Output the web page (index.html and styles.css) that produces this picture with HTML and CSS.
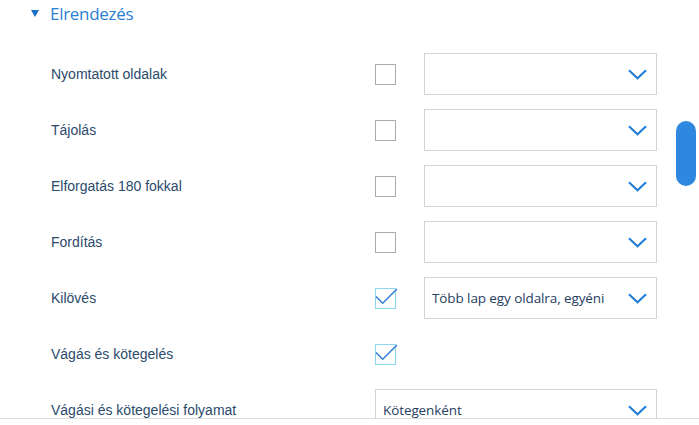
FILE: index.html
```html
<!DOCTYPE html>
<html>
<head>
<meta charset="utf-8">
<link rel="stylesheet" href="styles.css">
</head>
<body>
<div class="page">
  <div class="section-head">
    <span class="tri"></span>
    <span class="title">Elrendezés</span>
  </div>
  <div class="rows">
    <div class="row">
      <div class="label">Nyomtatott oldalak</div>
      <div class="cb"></div>
      <div class="select"><span class="val"></span><svg class="chev" viewBox="0 0 20 11"><path d="M1 1 L10 9.5 L19 1"/></svg></div>
    </div>
    <div class="row">
      <div class="label">Tájolás</div>
      <div class="cb"></div>
      <div class="select"><span class="val"></span><svg class="chev" viewBox="0 0 20 11"><path d="M1 1 L10 9.5 L19 1"/></svg></div>
    </div>
    <div class="row">
      <div class="label">Elforgatás 180 fokkal</div>
      <div class="cb"></div>
      <div class="select"><span class="val"></span><svg class="chev" viewBox="0 0 20 11"><path d="M1 1 L10 9.5 L19 1"/></svg></div>
    </div>
    <div class="row">
      <div class="label">Fordítás</div>
      <div class="cb"></div>
      <div class="select"><span class="val"></span><svg class="chev" viewBox="0 0 20 11"><path d="M1 1 L10 9.5 L19 1"/></svg></div>
    </div>
    <div class="row">
      <div class="label">Kilövés</div>
      <div class="cb checked"><svg class="tick" viewBox="0 0 24 20"><path d="M1 9 L8 16 L23 1"/></svg></div>
      <div class="select"><span class="val">Több lap egy oldalra, egyéni</span><svg class="chev" viewBox="0 0 20 11"><path d="M1 1 L10 9.5 L19 1"/></svg></div>
    </div>
    <div class="row">
      <div class="label">Vágás és kötegelés</div>
      <div class="cb checked"><svg class="tick" viewBox="0 0 24 20"><path d="M1 9 L8 16 L23 1"/></svg></div>
    </div>
    <div class="row">
      <div class="label">Vágási és kötegelési folyamat</div>
      <div class="select wide"><span class="val">Kötegenként</span><svg class="chev" viewBox="0 0 20 11"><path d="M1 1 L10 9.5 L19 1"/></svg></div>
    </div>
  </div>
  <div class="scroll-thumb"></div>
  <div class="footer"></div>
</div>
</body>
</html>
```
FILE: styles.css
```css
html, body {
  margin: 0;
  padding: 0;
  background: #fff;
  overflow: hidden;
}
.page {
  position: relative;
  width: 699px;
  height: 425px;
  overflow: hidden;
}
.section-head {
  display: flex;
  align-items: center;
  height: 26px;
  padding-left: 31px;
}
.tri {
  width: 0;
  height: 0;
  border-left: 4px solid transparent;
  border-right: 4px solid transparent;
  border-top: 7px solid #1b6fc6;
  margin-right: 11px;
  margin-top: 1px;
}
.title {
  font-family: "Open Sans", "Noto Sans", sans-serif;
  font-size: 17px;
  color: #2a7fd4;
  letter-spacing: -0.3px;
}
.rows {
  padding-top: 20px;
  padding-left: 51px;
}
.row {
  display: grid;
  grid-template-columns: 296px 21px 233px;
  column-gap: 28px;
  align-items: center;
  height: 56px;
}
.label {
  font-family: "Liberation Sans", Arial, sans-serif;
  font-size: 14px;
  color: #2b4a6c;
}
.cb {
  width: 19px;
  height: 19px;
  border: 1px solid #a8acaf;
  position: relative;
}
.cb.checked {
  border-color: #8fd6ea;
}
.tick {
  position: absolute;
  left: -1px;
  top: -1px;
  width: 23px;
  height: 19px;
  fill: none;
  stroke: #2b7fd6;
  stroke-width: 1.6;
}
.select {
  border: 1px solid #d3d3d3;
  display: flex;
  align-items: center;
  justify-content: space-between;
  padding: 0 9px 0 7px;
  box-sizing: border-box;
  height: 42px;
}
.select.wide {
  grid-column: 2 / 4;
}
.val {
  font-family: "Open Sans", "Noto Sans", sans-serif;
  font-size: 13.5px;
  color: #26405f;
  letter-spacing: -0.1px;
}
.chev {
  width: 19px;
  height: 11px;
  fill: none;
  stroke: #1f7fd6;
  stroke-width: 2.2;
}
.scroll-thumb {
  position: absolute;
  left: 676px;
  top: 121px;
  width: 20px;
  height: 65px;
  border-radius: 10px;
  background: #2f88e0;
}
.footer {
  position: absolute;
  left: 0;
  right: 0;
  top: 418px;
  bottom: 0;
  background: #fff;
  border-top: 1px solid #dcdcdc;
}
```
